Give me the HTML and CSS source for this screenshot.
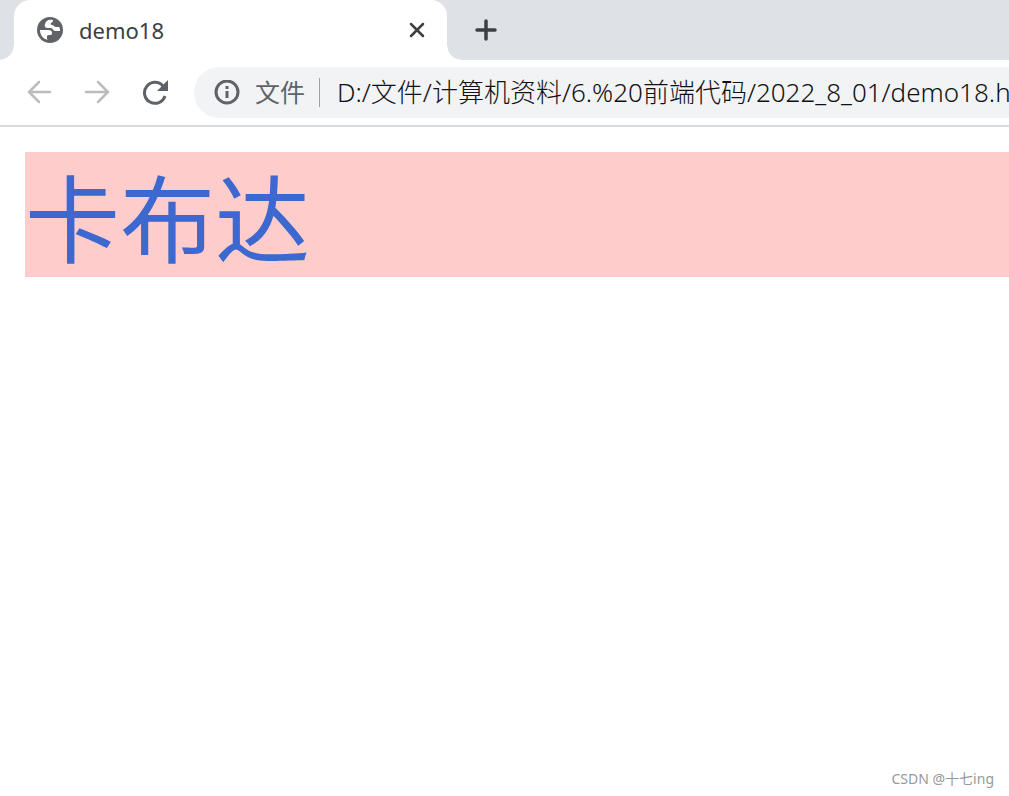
FILE: index.html
```html
<!DOCTYPE html>
<html lang="zh-CN">
<head>
    <meta charset="UTF-8">
    <meta name="viewport" content="width=device-width, initial-scale=1.0">
    <title>demo18</title>
    <link rel="stylesheet" href="styles.css">
</head>
<body>
    <header class="browser">
        <div class="tabs">
            <div class="tab">
                <svg class="globe" viewBox="0 0 26 26">
                    <circle cx="13" cy="13" r="13" fill="#5f6368"/>
                    <path d="M3 13h8c3 0 4 1 4 3s-1 2-3 2c-2 0-2 1-2 2v2c1 1 2 1 3 1C7 23 3 19 3 13z" fill="#fff"/>
                    <path d="M16 3c-5-1-7 1-8 4-1 3 1 4 3 4h3c2 0 2 3 4 3h5c0-2 0-3-1-4h-3c-2 0-2-2-4-2-1 0-2-1-1-2s2-1 2-3z" fill="#fff"/>
                </svg>
                <span class="tab-title">demo18</span>
                <button class="close" aria-label="Close tab">
                    <svg width="16" height="16" viewBox="0 0 16 16"><path d="M2 2l12 12M14 2L2 14"/></svg>
                </button>
            </div>
            <button class="new-tab" aria-label="New tab">
                <svg width="22" height="22" viewBox="0 0 22 22"><path d="M11 2v18M2 11h18"/></svg>
            </button>
        </div>
        <div class="toolbar">
            <button class="nav" aria-label="Back" disabled>
                <svg width="26" height="26" viewBox="0 0 26 26"><path d="M24 12H3M13 2L3 12l10 10"/></svg>
            </button>
            <button class="nav" aria-label="Forward" disabled>
                <svg width="26" height="26" viewBox="0 0 26 26"><path d="M2 12h22M14 2l10 10-10 10"/></svg>
            </button>
            <button class="nav reload" aria-label="Reload">
                <svg width="26" height="26" viewBox="0 0 26 26">
                    <path d="M23 16a10.500 10.500 0 1 1-2-10"/>
                    <path class="solid" d="M26 0v11H15z"/>
                </svg>
            </button>
            <div class="address">
                <svg class="info" width="26" height="26" viewBox="0 0 26 26">
                    <circle cx="13" cy="12" r="11"/>
                    <path d="M13 11v7M13 6v3"/>
                </svg>
                <label class="scheme" for="url">文件</label>
                <input class="url" id="url" type="text" spellcheck="false" value="D:/文件/计算机资料/6.%20前端代码/2022_8_01/demo18.html">
            </div>
        </div>
    </header>

    <main class="page">
        <div class="box">卡布达</div>
    </main>

    <footer class="watermark">CSDN @十七ing</footer>
</body>
</html>
```
FILE: styles.css
```css
* {
    box-sizing: border-box;
}
body {
    margin: 0;
    min-height: 100vh;
    display: flex;
    flex-direction: column;
    background-color: #fff;
    color: #202124;
    font-family: "Noto Sans", "Noto Sans CJK SC", sans-serif;
    overflow-x: hidden;
}
button {
    display: flex;
    align-items: center;
    justify-content: center;
    padding: 0;
    border: none;
    background: none;
    cursor: pointer;
}
svg {
    display: block;
    fill: none;
    stroke-linecap: round;
}

/* tab strip */
.tabs {
    display: flex;
    height: 60px;
    padding-left: 14px;
    background-color: #dee1e6;
}
.tab {
    position: relative;
    display: flex;
    align-items: center;
    width: 433px;
    padding: 0 20px 0 23px;
    background-color: #fff;
    border-radius: 16px 16px 0 0;
}
.tab::before,
.tab::after {
    content: "";
    position: absolute;
    bottom: 0;
    width: 14px;
    height: 14px;
}
.tab::before {
    right: 100%;
    background: radial-gradient(circle at 0 0, transparent 13px, #fff 14px);
}
.tab::after {
    left: 100%;
    background: radial-gradient(circle at 100% 0, transparent 13px, #fff 14px);
}
.globe {
    width: 26px;
    height: 26px;
}
.tab-title {
    flex: 1;
    margin-left: 16px;
    font-size: 22px;
    color: #3c4043;
}
.close svg {
    stroke: #3c4043;
    stroke-width: 2.5;
}
.close {
    width: 20px;
    height: 20px;
}
.new-tab {
    margin-left: 28px;
}
.new-tab svg {
    stroke: #3c4043;
    stroke-width: 3.5;
}

/* toolbar */
.toolbar {
    display: flex;
    align-items: center;
    height: 67px;
    padding-left: 26px;
    border-bottom: 2px solid #dadadc;
}
.nav {
    margin-right: 32px;
}
.nav svg {
    stroke: #babcbe;
    stroke-width: 2.5;
}
.reload {
    margin-right: 26px;
}
.reload svg {
    stroke: #5f6368;
    stroke-width: 3;
    stroke-linecap: butt;
}
.reload .solid {
    fill: #5f6368;
    stroke: none;
}
.address {
    flex: 1;
    min-width: 0;
    display: flex;
    align-items: center;
    height: 51px;
    padding-left: 20px;
    background-color: #f1f3f4;
    border-radius: 26px 0 0 26px;
}
.info {
    flex: none;
    stroke: #5f6368;
    stroke-width: 3;
    stroke-linecap: butt;
}
.scheme {
    flex: none;
    margin-left: 15px;
    padding-right: 14px;
    border-right: 1px solid #9aa0a6;
    font-size: 25px;
    line-height: 29px;
    color: #5f6368;
}
.url {
    flex: 1;
    min-width: 0;
    padding: 0 0 4px 17px;
    border: none;
    outline: none;
    background: none;
    color: #101114;
    font-family: inherit;
    font-size: 26px;
    font-weight: 300;
}

/* page content */
.page {
    flex: 1;
    padding: 25px 0 0 25px;
}
.box {
    padding-top: 10px;
    background-color: #ffcccc;
    color: #3c68d0;
    font-size: 95px;
    line-height: 115px;
}
.watermark {
    padding: 0 15px 7px 0;
    text-align: right;
    font-size: 14px;
    line-height: 20px;
    color: #999;
}
```
